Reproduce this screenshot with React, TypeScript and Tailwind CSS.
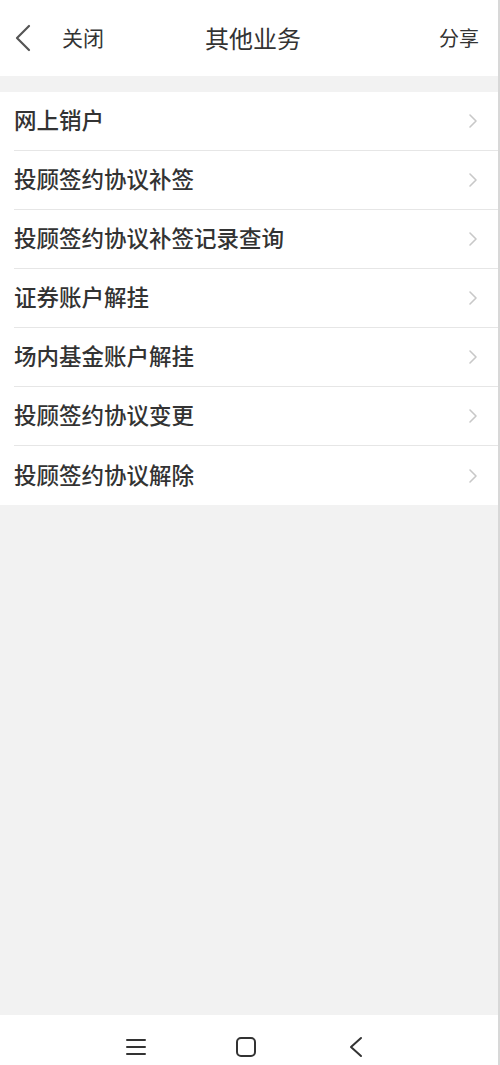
import React from 'react';

const items = [
  '网上销户',
  '投顾签约协议补签',
  '投顾签约协议补签记录查询',
  '证券账户解挂',
  '场内基金账户解挂',
  '投顾签约协议变更',
  '投顾签约协议解除',
];

const font = { fontFamily: '"Noto Sans CJK SC", "Noto Sans", sans-serif' };

const App = () => {
  return (
    <div className="w-[500px] h-[1065px] flex flex-col bg-[#f2f2f2] border-r-2 border-[#d8d8d8] text-[#333]" style={font}>
      {/* top bar */}
      <div className="h-[76px] bg-white flex items-center relative shrink-0">
        <button className="ml-[13px] w-[20px] h-[30px] flex items-center justify-center text-[#555]">
          <svg width="18" height="28" viewBox="0 0 18 28" fill="none" stroke="currentColor" strokeWidth="2.2" strokeLinecap="round" strokeLinejoin="round">
            <path d="M15 2 L3 14 L15 26" />
          </svg>
        </button>
        <span className="ml-[29px] text-[21px] text-[#333]">关闭</span>
        <span className="absolute left-[253px] -translate-x-1/2 text-[24px] text-[#333]">其他业务</span>
        <span className="ml-auto mr-[19px] text-[20px] text-[#333]">分享</span>
      </div>

      <div className="h-[16px] shrink-0" />

      <div className="bg-white">
        {items.map((item, i) => (
          <div key={item} className="pl-[14px]">
            <div className={`h-[59px] flex items-center pr-[20px] ${i < items.length - 1 ? 'border-b border-[#e6e6e6]' : ''}`}>
              <span className="text-[22.5px] font-medium text-[#333] leading-none -mt-[3px]">{item}</span>
              <svg className="ml-auto" width="10" height="16" viewBox="0 0 10 16" fill="none" stroke="#c8c8c8" strokeWidth="1.6" strokeLinecap="round" strokeLinejoin="round">
                <path d="M2 2 L8 8 L2 14" />
              </svg>
            </div>
          </div>
        ))}
      </div>

      <div className="flex-1" />

      {/* system nav bar */}
      <div className="h-[50px] bg-white flex items-center justify-center pt-[14px] pr-[6px] shrink-0 text-[#333]">
        <div className="w-[110px] flex justify-center">
          <svg width="22" height="20" viewBox="0 0 22 20" fill="none" stroke="currentColor" strokeWidth="2" strokeLinecap="round">
            <path d="M2 3 H20 M2 10 H20 M2 17 H20" />
          </svg>
        </div>
        <div className="w-[110px] flex justify-center">
          <svg width="22" height="22" viewBox="0 0 22 22" fill="none" stroke="currentColor" strokeWidth="2">
            <rect x="2" y="2" width="18" height="18" rx="4" />
          </svg>
        </div>
        <div className="w-[110px] flex justify-center">
          <svg width="16" height="22" viewBox="0 0 16 22" fill="none" stroke="currentColor" strokeWidth="2" strokeLinecap="round" strokeLinejoin="round">
            <path d="M13 2 L3 11 L13 20" />
          </svg>
        </div>
      </div>
    </div>
  );
};

export default App;
